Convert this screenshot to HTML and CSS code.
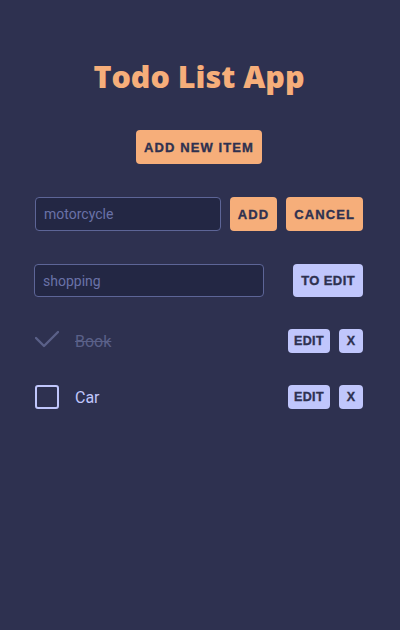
FILE: index.html
```html
<!DOCTYPE html>
<html>
<head>
<meta charset="utf-8">
<link rel="stylesheet" href="styles.css">
</head>
<body>
<div class="app">
  <h1 class="title">Todo List App</h1>
  <div class="center">
    <button class="btn btn-orange">ADD NEW ITEM</button>
  </div>
  <div class="row add-row">
    <input class="field grow" type="text" value="motorcycle">
    <button class="btn btn-orange">ADD</button>
    <button class="btn btn-orange">CANCEL</button>
  </div>
  <div class="row edit-row">
    <input class="field edit-field" type="text" value="shopping">
    <button class="btn btn-lav">TO EDIT</button>
  </div>
  <ul class="list">
    <li class="item">
      <span class="check">
        <svg width="24" height="24" viewBox="0 0 24 24"><path d="M1 9 L9 17 L23 3" fill="none" stroke="#5a6088" stroke-width="2.4" stroke-linecap="round" stroke-linejoin="round"/></svg>
      </span>
      <span class="label done">Book</span>
      <button class="btn btn-lav small">EDIT</button>
      <button class="btn btn-lav small">X</button>
    </li>
    <li class="item">
      <span class="check"><span class="box"></span></span>
      <span class="label">Car</span>
      <button class="btn btn-lav small">EDIT</button>
      <button class="btn btn-lav small">X</button>
    </li>
  </ul>
</div>
</body>
</html>
```
FILE: styles.css
```css
html, body {
  margin: 0;
  padding: 0;
  background: #2e3150;
  height: 100%;
}
.app {
  width: 328px;
  margin: 0 37px 0 35px;
  padding-top: 56px;
  font-family: Roboto, "Liberation Sans", sans-serif;
}
.title {
  margin: 0;
  text-align: center;
  color: #f6ae7a;
  font-family: "Open Sans", "Liberation Sans", sans-serif;
  font-weight: 800;
  font-size: 30.5px;
  line-height: 40px;
}
.center {
  display: flex;
  justify-content: center;
  margin-top: 34px;
}
.btn {
  border: none;
  border-radius: 4px;
  font-family: "Liberation Sans", Arial, sans-serif;
  font-weight: bold;
  font-size: 13px;
  letter-spacing: 1.1px;
  -webkit-text-stroke: 0.35px currentColor;
  color: #2e3150;
  height: 34px;
  padding: 0 8px;
  cursor: pointer;
}
.btn-orange { background: #f6ae7a; }
.btn-lav { background: #c0c6fc; letter-spacing: 0.4px; }
.row {
  display: flex;
  align-items: center;
}
.add-row {
  margin-top: 33px;
  gap: 9px;
}
.edit-row {
  margin-top: 33px;
  justify-content: space-between;
}
.field {
  box-sizing: border-box;
  height: 34px;
  background: #232744;
  border: 1px solid #5d6597;
  border-radius: 4px;
  color: #6a72a8;
  font-family: Roboto, "Liberation Sans", sans-serif;
  font-size: 14px;
  padding: 0 8px;
  outline: none;
}
.grow { flex: 1; min-width: 0; }
.edit-field { width: 230px; height: 33px; margin-left: -1px; }
.edit-row .btn { height: 33px; }
.list {
  list-style: none;
  margin: 32px 0 0;
  padding: 0;
}
.item {
  display: flex;
  align-items: center;
  gap: 9px;
  height: 24px;
  margin-bottom: 32px;
}
.check {
  width: 24px;
  height: 24px;
  display: flex;
  align-items: center;
  justify-content: center;
}
.box {
  box-sizing: border-box;
  width: 24px;
  height: 24px;
  border: 2px solid #c0c6fc;
  border-radius: 3px;
}
.label {
  flex: 1;
  margin-left: 7px;
  font-size: 16px;
  color: #c0c6fc;
}
.label.done {
  color: #5a6088;
  text-decoration: line-through;
}
.btn.small {
  height: 24px;
  padding: 0 6px;
  font-size: 12.5px;
  min-width: 24px;
}
```
